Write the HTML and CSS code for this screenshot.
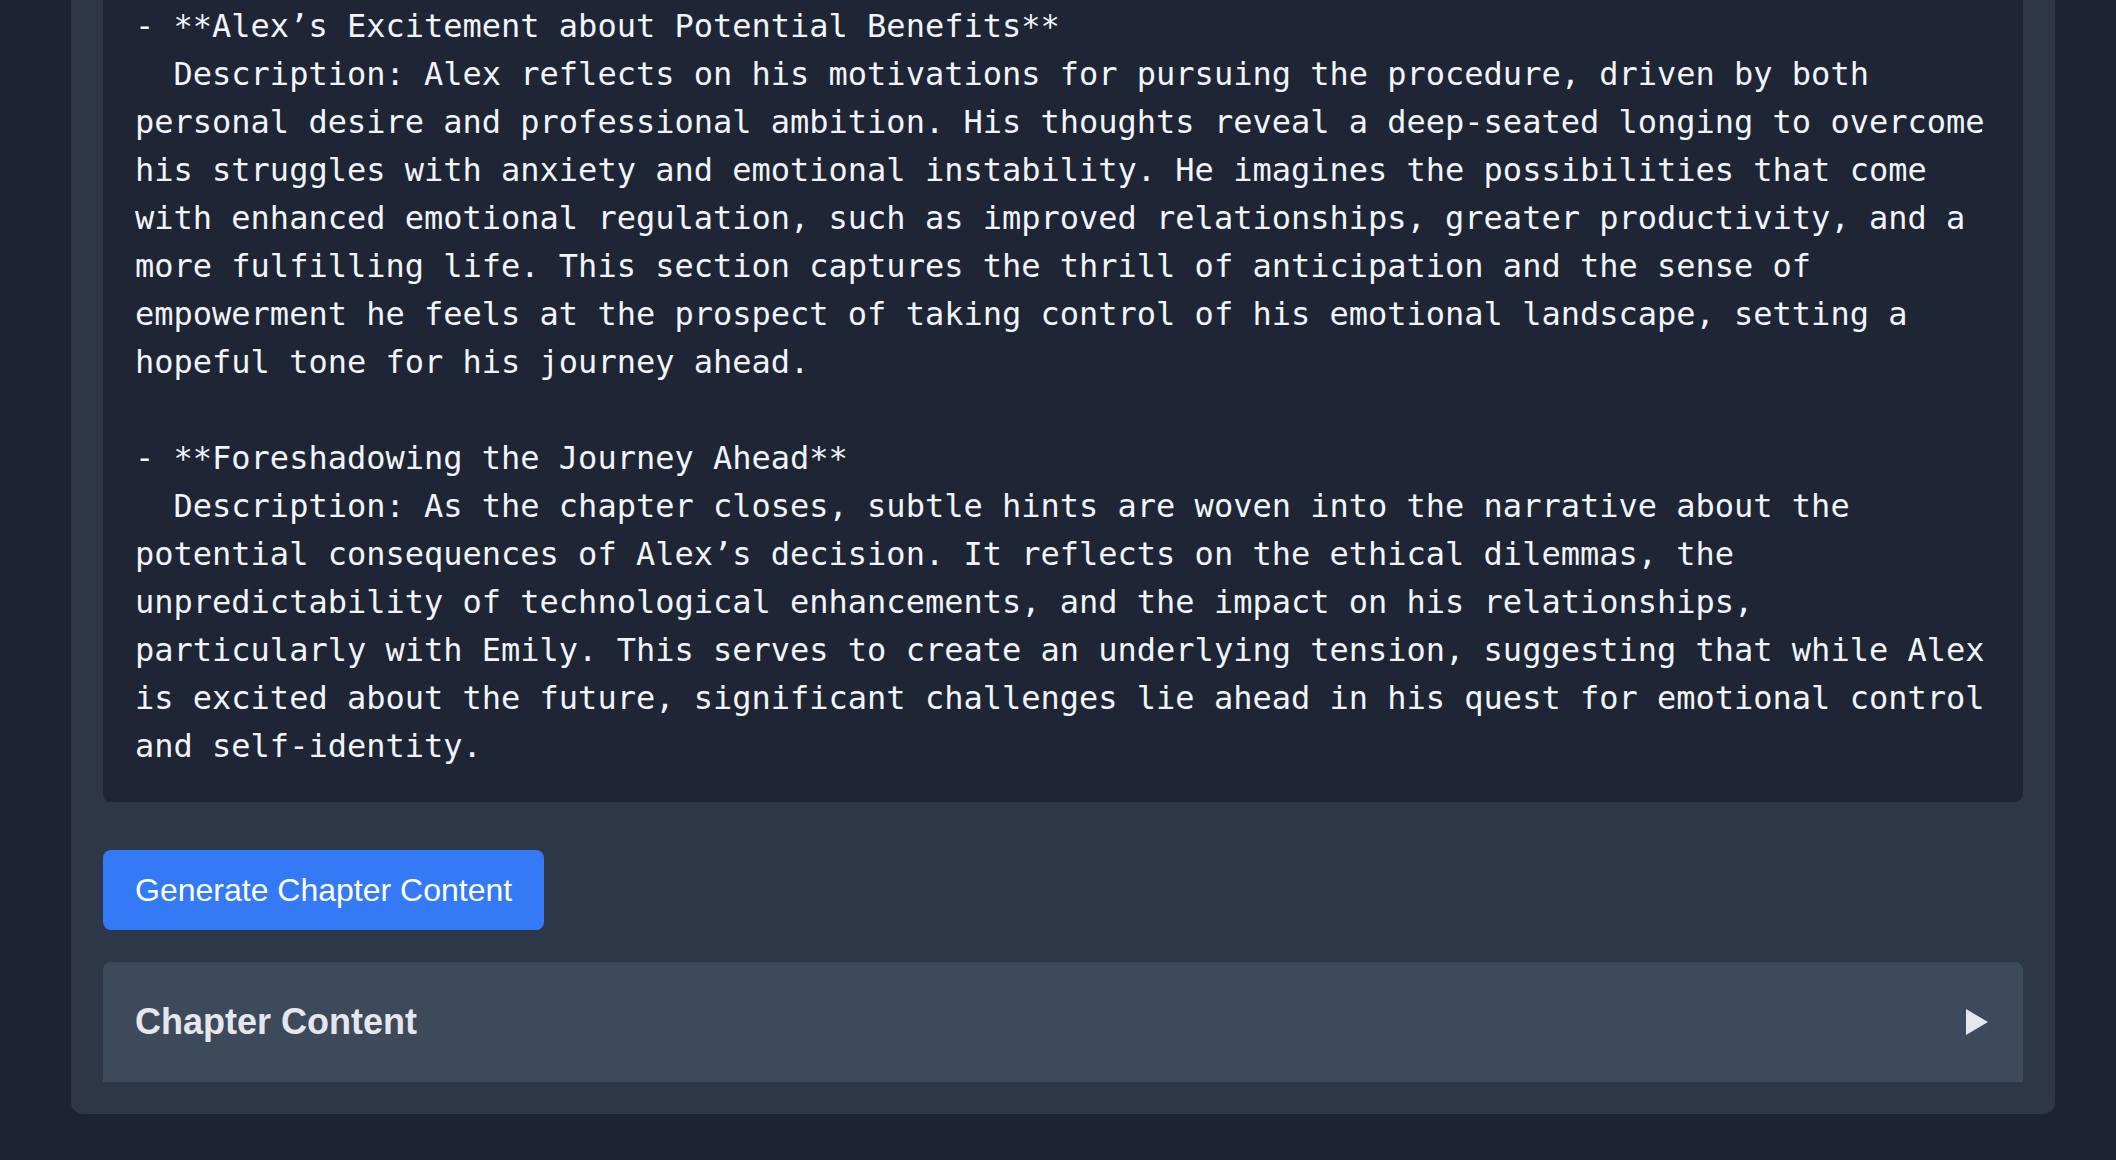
FILE: index.html
```html
<!DOCTYPE html>
<html>
<head>
  <meta charset="UTF-8">
  <title>Chapter Outline</title>
  <link rel="stylesheet" href="styles.css">
</head>
<body>
  <div class="card">
    <pre class="outline">- **Alex’s Excitement about Potential Benefits**
  Description: Alex reflects on his motivations for pursuing the procedure, driven by both personal desire and professional ambition. His thoughts reveal a deep-seated longing to overcome his struggles with anxiety and emotional instability. He imagines the possibilities that come with enhanced emotional regulation, such as improved relationships, greater productivity, and a more fulfilling life. This section captures the thrill of anticipation and the sense of empowerment he feels at the prospect of taking control of his emotional landscape, setting a hopeful tone for his journey ahead.

- **Foreshadowing the Journey Ahead**
  Description: As the chapter closes, subtle hints are woven into the narrative about the potential consequences of Alex’s decision. It reflects on the ethical dilemmas, the unpredictability of technological enhancements, and the impact on his relationships, particularly with Emily. This serves to create an underlying tension, suggesting that while Alex is excited about the future, significant challenges lie ahead in his quest for emotional control and self-identity.
</pre>

    <button type="button" class="btn">Generate Chapter Content</button>

    <details class="section">
      <summary>
        <span class="section-title">Chapter Content</span>
        <svg class="arrow" width="24" height="28" viewBox="0 0 24 28"><polygon points="1,1 23,14 1,27" fill="#e5e7eb"/></svg>
      </summary>
    </details>
  </div>
</body>
</html>
```

FILE: styles.css
```css
/* reset things */
* {
  margin: 0; padding: 0;
  box-sizing: border-box;
}
html, body {
  background-color: #1c2434;
}
body {
  padding-bottom: 47px;
}

.card {
  margin: -62px 61px 0 71px;
  padding: 32px;
  background-color: #2d3748;
  border-radius: 12px;
}
  .outline {
    padding: 32px;
    font: normal 32px/48px "DejaVu Sans Mono", monospace;
    color: #f1f4f8;
    white-space: pre-wrap;
    background-color: #1e2635;
    border-radius: 8px;
  }
  .btn {
    display: block;
    margin-top: 48px;
    padding: 16px 32px;
    font: normal 32px/48px "Liberation Sans", Arial, sans-serif;
    color: #fff;
    background-color: #3479f5;
    border: 0;
    border-radius: 8px;
  }
  .section {
    margin-top: 32px;
    background-color: #3c4a5c;
    border-radius: 8px 8px 0 0;
  }
    .section summary {
      display: flex;
      align-items: center;
      justify-content: space-between;
      padding: 32px;
      list-style: none;
      cursor: pointer;
    }
    .section summary::-webkit-details-marker {
      display: none;
    }
    .section-title {
      font: bold 36px/56px "Liberation Sans", Arial, sans-serif;
      color: #e5e7eb;
    }
    .arrow {
      display: block;
      margin-right: 2px;
    }
```
